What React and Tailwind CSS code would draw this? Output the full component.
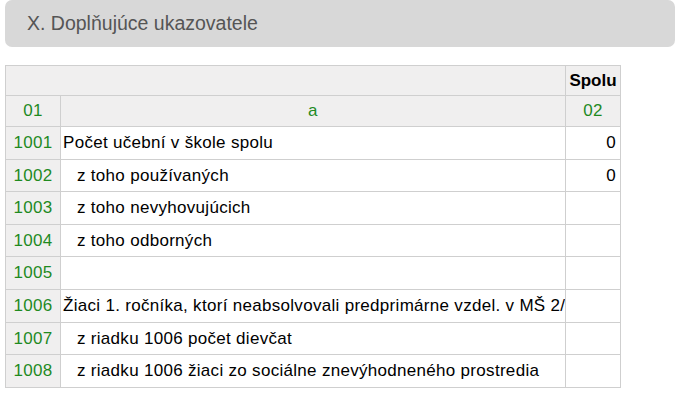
const ROWS = [
  { code: '1001', label: 'Počet učební v škole spolu', value: '0' },
  { code: '1002', label: 'z toho používaných', value: '0', indent: true },
  { code: '1003', label: 'z toho nevyhovujúcich', value: '', indent: true },
  { code: '1004', label: 'z toho odborných', value: '', indent: true },
  { code: '1005', label: '', value: '' },
  { code: '1006', label: 'Žiaci 1. ročníka, ktorí neabsolvovali predprimárne vzdel. v MŠ 2/', value: '' },
  { code: '1007', label: 'z riadku 1006 počet dievčat', value: '', indent: true },
  { code: '1008', label: 'z riadku 1006 žiaci zo sociálne znevýhodneného prostredia', value: '', indent: true },
]

export default function App() {
  return (
    <div className="min-h-[401px] bg-white font-['Liberation_Sans',Arial,sans-serif] text-black">
      {/* Section header */}
      <div className="ml-[5px] h-[47px] flex items-center rounded-[7px] bg-[#d8d8d8] pl-[22px]">
        <h2 className="text-[19.5px] text-[#555]">X. Doplňujúce ukazovatele</h2>
      </div>

      {/* Table */}
      <table className="ml-[5px] mt-[18px] w-[616px] table-fixed border-collapse text-[17px] tracking-[0.3px]">
        <colgroup>
          <col className="w-[55px]" />
          <col />
          <col className="w-[55px]" />
        </colgroup>
        <thead>
          <tr className="h-[30px] bg-[#f0efef]">
            <th className="border border-[#cfcfcf]" colSpan={2}></th>
            <th className="border border-[#cfcfcf] px-[2px] text-center font-bold tracking-normal">Spolu</th>
          </tr>
          <tr className="h-[31px] bg-[#f0efef] font-normal text-[#1f8a1f]">
            <td className="border border-[#cfcfcf] text-center">01</td>
            <td className="border border-[#cfcfcf] text-center">a</td>
            <td className="border border-[#cfcfcf] text-center">02</td>
          </tr>
        </thead>
        <tbody>
          {ROWS.map((row) => (
            <tr key={row.code} className="h-[32.6px]">
              <td className="border border-[#cfcfcf] bg-[#f0efef] text-center text-[#1f8a1f]">{row.code}</td>
              <td className="overflow-hidden whitespace-nowrap border border-[#cfcfcf] pl-[2px]">
                <span className={row.indent ? 'pl-[14px]' : ''}>{row.label}</span>
              </td>
              <td className="border border-[#cfcfcf] pr-[4px] text-right">{row.value}</td>
            </tr>
          ))}
        </tbody>
      </table>
    </div>
  )
}
